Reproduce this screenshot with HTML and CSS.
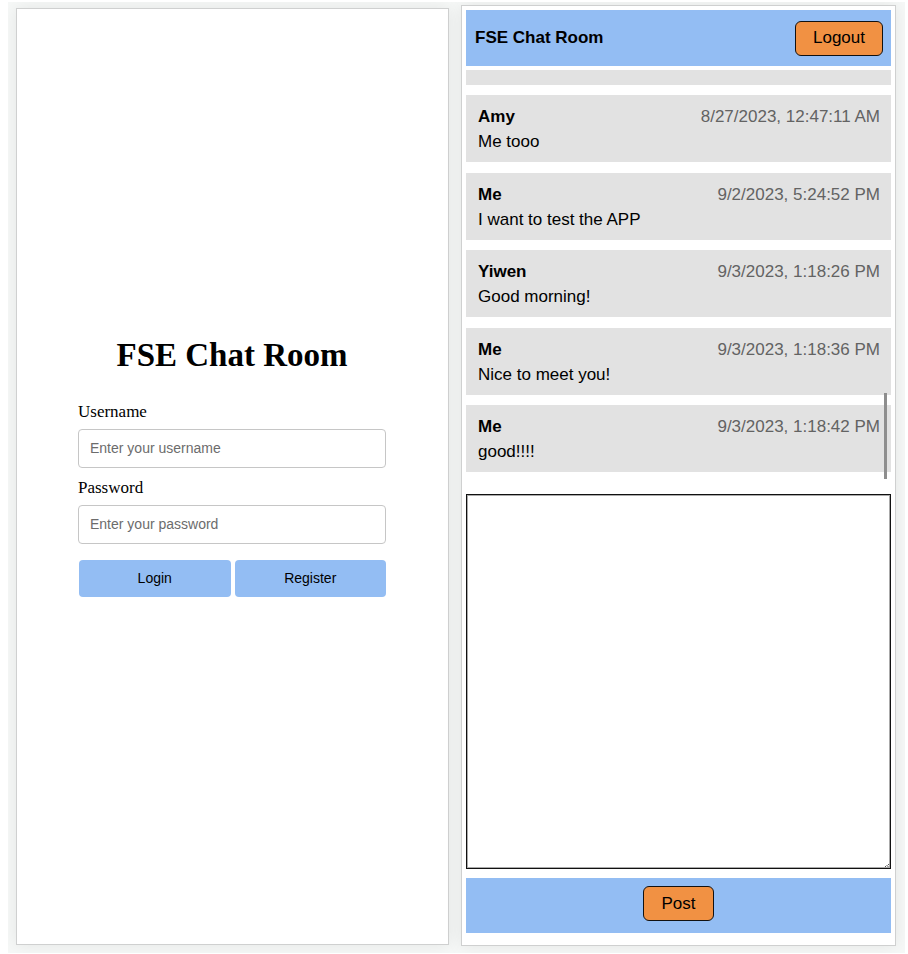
FILE: index.html
```html
<!DOCTYPE html>
<html lang="en">
<head>
<meta charset="utf-8">
<meta name="viewport" content="width=device-width, initial-scale=1">
<title>FSE Chat Room</title>
<link rel="stylesheet" href="styles.css">
</head>
<body>
<div class="screens">
  <main class="panel login">
    <h1 class="login-title">FSE Chat Room</h1>
    <form class="login-form">
      <div class="field">
        <label for="username">Username</label>
        <input id="username" type="text" placeholder="Enter your username">
      </div>
      <div class="field">
        <label for="password">Password</label>
        <input id="password" type="password" placeholder="Enter your password">
      </div>
      <div class="actions">
        <button type="button">Login</button>
        <button type="button">Register</button>
      </div>
    </form>
  </main>
  <section class="panel chat">
    <header class="chat-header">
      <h2>FSE Chat Room</h2>
      <button class="accent" type="button">Logout</button>
    </header>
    <div class="messages">
      <div class="message-tail"></div>
      <article class="message">
        <div class="meta"><strong>Amy</strong><time>8/27/2023, 12:47:11 AM</time></div>
        <p>Me tooo</p>
      </article>
      <article class="message">
        <div class="meta"><strong>Me</strong><time>9/2/2023, 5:24:52 PM</time></div>
        <p>I want to test the APP</p>
      </article>
      <article class="message">
        <div class="meta"><strong>Yiwen</strong><time>9/3/2023, 1:18:26 PM</time></div>
        <p>Good morning!</p>
      </article>
      <article class="message">
        <div class="meta"><strong>Me</strong><time>9/3/2023, 1:18:36 PM</time></div>
        <p>Nice to meet you!</p>
      </article>
      <article class="message">
        <div class="meta"><strong>Me</strong><time>9/3/2023, 1:18:42 PM</time></div>
        <p>good!!!!</p>
      </article>
      <span class="scroll-thumb"></span>
    </div>
    <div class="composer">
      <textarea aria-label="Message"></textarea>
      <svg class="grip" viewBox="0 0 4 4" aria-hidden="true"><path d="M0 3.5h1M1.5 2.5h1M2.500 3.500h1M3 1.500h1"/></svg>
    </div>
    <footer class="chat-footer">
      <button class="accent" type="button">Post</button>
    </footer>
  </section>
</div>
</body>
</html>
```
FILE: styles.css
```css
* {
  box-sizing: border-box;
}

body {
  margin: 0;
  padding: 2px 3px 1px 8px;
  background: #fff;
  color: #000;
  font-family: "Liberation Sans", Arial, sans-serif;
  font-size: 17px;
}

h1,
h2,
p {
  margin: 0;
}

button,
input,
textarea {
  font-family: inherit;
  color: #000;
}

.screens {
  display: grid;
  grid-template-columns: 433fr 435fr;
  gap: 12px;
  min-height: calc(100vh - 3px);
  padding: 3px 9px 7px 8px;
  background: #f6f8f7;
  overflow: hidden;
}

.panel {
  min-width: 0;
  display: flex;
  flex-direction: column;
  background: #fff;
  border: 1px solid #cfd0d0;
  box-shadow: 0 0 16px rgba(0, 0, 0, 0.08);
}

.login {
  justify-content: center;
  margin: 3px 0 1px;
  padding: 0 62px 21px 61px;
  font-family: "Liberation Serif", "Times New Roman", serif;
}

.login-title {
  margin-bottom: 27px;
  font-size: 33px;
  line-height: 40px;
  text-align: center;
}

.field {
  display: flex;
  flex-direction: column;
  gap: 7px;
  margin-bottom: 10px;
  line-height: 20px;
}

.field input {
  width: 100%;
  height: 39px;
  padding: 0 11px 1px;
  border: 1px solid #c6c6c6;
  border-radius: 4px;
  background: #fff;
  font-family: "Liberation Sans", Arial, sans-serif;
  font-size: 14px;
}

.field input::placeholder {
  color: #6c6c6c;
}

.actions {
  display: flex;
  gap: 4px;
  padding: 6px 0 0 1px;
}

.actions button {
  flex: 1;
  height: 37px;
  padding: 0 6px 2px;
  border: 0;
  border-radius: 4px;
  background: #93bdf3;
  font-family: "Liberation Sans", Arial, sans-serif;
  font-size: 14px;
}

.chat {
  padding: 4px 4px 12px;
}

.chat-header {
  display: flex;
  align-items: center;
  justify-content: space-between;
  height: 56px;
  padding: 0 8px 0 9px;
  background: #93bdf3;
}

.chat-header h2 {
  font-size: 17px;
}

.accent {
  height: 35px;
  padding: 0 17px;
  border: 1px solid #111;
  border-radius: 6px;
  background: #f19143;
  font-size: 17px;
}

.messages {
  position: relative;
  flex: 15 1 0;
  display: flex;
  flex-direction: column;
  justify-content: space-between;
  margin-top: 4px;
}

.message-tail {
  height: 15px;
  background: #e2e2e2;
}

.message {
  padding: 9px 11px 8px 12px;
  background: #e2e2e2;
  line-height: 25px;
}

.meta {
  display: flex;
  justify-content: space-between;
}

.meta time {
  color: #636363;
}

.scroll-thumb {
  position: absolute;
  right: 4px;
  bottom: -7px;
  width: 3px;
  height: 86px;
  background: #8e8e8e;
}

.composer {
  position: relative;
  flex: 14 1 0;
  display: flex;
  margin: 22px 0 9px;
}

.composer textarea {
  flex: 1;
  min-width: 0;
  padding: 8px;
  border: 1px solid #111;
  box-shadow: inset 0 0 0 1px #aaa;
  background: #fff;
  font-size: 17px;
  resize: none;
}

.grip {
  position: absolute;
  right: 2px;
  bottom: 2px;
  width: 4px;
  height: 4px;
  stroke: #555;
}

.chat-footer {
  display: flex;
  align-items: center;
  justify-content: center;
  height: 55px;
  padding-bottom: 4px;
  background: #93bdf3;
}
```
